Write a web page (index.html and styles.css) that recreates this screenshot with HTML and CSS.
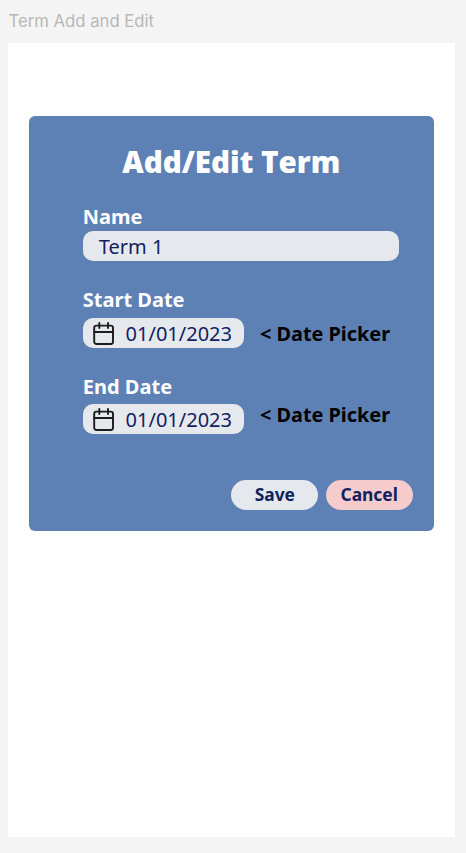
FILE: index.html
```html
<!DOCTYPE html>
<html lang="en">
<head>
<meta charset="utf-8">
<title>Term Add and Edit</title>
<link rel="stylesheet" href="styles.css">
</head>
<body>
<svg width="0" height="0" class="sprite">
  <symbol id="calendar" viewBox="0 0 22 24">
    <rect x="1.2" y="3.6" width="18.8" height="18.4" rx="2.2"/>
    <path d="M1.2 10h18.8M6.3 1v5M15 1v5"/>
  </symbol>
</svg>
<div class="frame-title">Term Add and Edit</div>
<main class="screen">
  <form class="card">
    <h1>Add/Edit Term</h1>
    <section class="group name">
      <span class="label">Name</span>
      <div class="field">Term 1</div>
    </section>
    <section class="group start">
      <span class="label">Start Date</span>
      <div class="row">
        <div class="field date"><svg class="icon"><use href="#calendar"/></svg><span>01/01/2023</span></div>
        <span class="picker">&lt; Date Picker</span>
      </div>
    </section>
    <section class="group end">
      <span class="label">End Date</span>
      <div class="row">
        <div class="field date"><svg class="icon"><use href="#calendar"/></svg><span>01/01/2023</span></div>
        <span class="picker">&lt; Date Picker</span>
      </div>
    </section>
    <div class="actions">
      <button type="button" class="save">Save</button>
      <button type="button" class="cancel">Cancel</button>
    </div>
  </form>
</main>
</body>
</html>
```
FILE: styles.css
```css
* { box-sizing: border-box; }
body {
  margin: 0;
  padding: 0 11px 16px 8px;
  height: 853px;
  background: #f4f4f4;
  font-family: "Noto Sans", "Open Sans", sans-serif;
  overflow: hidden;
  display: flex;
  flex-direction: column;
}
.sprite { display: none; }
.frame-title {
  height: 43px;
  padding-left: 0.5px;
  font: 400 16.7px/42px Inter, sans-serif;
  color: #b8b8b8;
}
.screen {
  flex: 1;
  background: #fff;
  padding: 73px 21.3px 0;
}
.card {
  height: 415px;
  padding: 25px 0 0 53.5px;
  border-radius: 6px;
  background: #5d81b5;
}
h1 {
  margin: 0 0 20px -54px;
  font: 800 29.6px/42px "Open Sans", sans-serif;
  color: #fff;
  text-align: center;
}
.group {
  display: flex;
  flex-direction: column;
  font-size: 20px;
}
.label {
  height: 28px;
  line-height: 28px;
  font-weight: 700;
  color: #fff;
}
.field {
  width: 316.2px;
  height: 30px;
  padding-left: 16px;
  border-radius: 10px;
  background: #e5e8ed;
  color: #11235f;
  line-height: 31px;
}
.start { margin-top: 25px; }
.start .label { height: 32px; }
.end { margin-top: 25px; }
.end .label { height: 31px; line-height: 27px; }
.row { display: flex; gap: 16px; }
.date {
  display: flex;
  gap: 10.5px;
  width: 161.2px;
  padding-left: 10.3px;
  line-height: 32px;
}
.end .date { line-height: 31px; }
.icon {
  width: 22px;
  height: 24px;
  margin-top: 4px;
  fill: none;
  stroke: #1c1c1e;
  stroke-width: 1.9;
  stroke-linecap: round;
}
.picker {
  font-size: 19.85px;
  font-weight: 700;
  line-height: 32px;
  height: 30px;
  color: #000;
}
.end .picker { margin-top: -5px; }
.actions {
  display: flex;
  justify-content: flex-end;
  gap: 7.4px;
  margin: 46px 21px 0 0;
}
button {
  width: 87px;
  height: 30px;
  padding: 0 0 2px;
  border: 0;
  border-radius: 15px;
  font: 700 17.4px/28px "Noto Sans", sans-serif;
  color: #11235f;
}
.save { background: #e5e8ed; }
.cancel { background: #f5cbcb; }
```
